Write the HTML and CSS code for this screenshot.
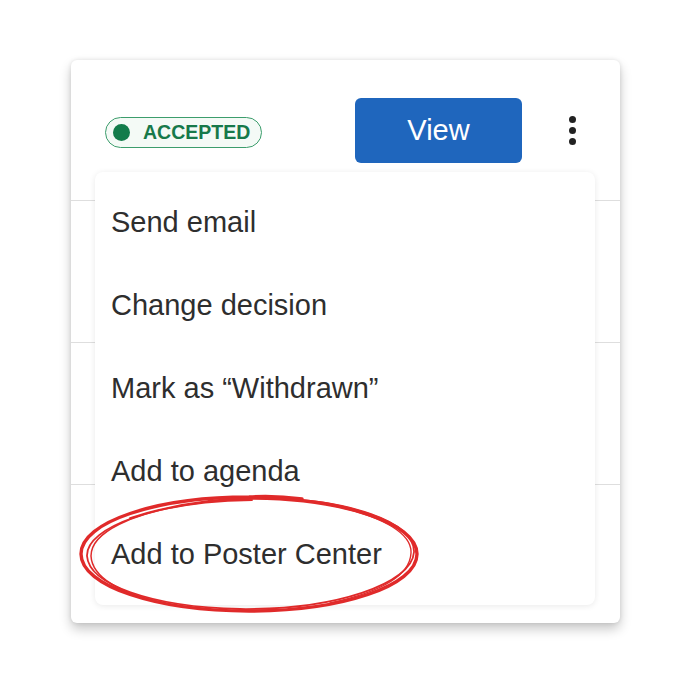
FILE: index.html
```html
<!DOCTYPE html>
<html>
<head>
<meta charset="utf-8">
<link rel="stylesheet" href="styles.css">
</head>
<body>
<div class="card">
  <div class="row header">
    <span class="badge"><span class="dot"></span>ACCEPTED</span>
    <span class="spacer"></span>
    <button class="view">View</button>
    <span class="kebab"><i></i><i></i><i></i></span>
  </div>
  <div class="row"></div>
  <div class="row"></div>
  <div class="row last"></div>

  <ul class="menu">
    <li>Send email</li>
    <li>Change decision</li>
    <li>Mark as “Withdrawn”</li>
    <li>Add to agenda</li>
    <li>Add to Poster Center</li>
  </ul>
</div>
<svg class="scribble" width="699" height="692" viewBox="0 0 699 692">
  <path d="M 302 499 C 280 496 262 496 249 497 C 156 497 81 522 81 554 C 81 586 156 611 249 611 C 342 611 417 586 417 554 C 417 523 342 498 249 498" fill="none" stroke="#e02a2a" stroke-width="3.4" stroke-linecap="round"/>
  <path d="M 252 500 C 158 501 86 527 87 556 C 89 584 150 607 240 609 C 335 610 412 584 414 552 C 415 522 350 499 260 498 C 215 498 170 505 130 518" fill="none" stroke="#e02a2a" stroke-width="1.8" stroke-linecap="round"/>
  <path d="M 200 503 C 130 512 91 533 91 556 C 92 577 120 594 165 603" fill="none" stroke="#e02a2a" stroke-width="1.5" stroke-linecap="round"/>
  <path d="M 330 505 C 387 517 412 535 411 553 C 410 575 381 592 330 603" fill="none" stroke="#e02a2a" stroke-width="1.4" stroke-linecap="round"/>
</svg>
</body>
</html>
```
FILE: styles.css
```css
* { box-sizing: border-box; }
html, body { margin: 0; padding: 0; background: #ffffff; }
body {
  width: 699px;
  height: 692px;
  padding: 60px 0 0 71px;
  font-family: "Liberation Sans", Arial, Helvetica, sans-serif;
  position: relative;
}
.card {
  position: relative;
  width: 549px;
  height: 563px;
  background: #ffffff;
  border-radius: 6px;
  box-shadow: 0 6px 12px rgba(0,0,0,0.22), 0 0 4px rgba(0,0,0,0.10);
  display: flex;
  flex-direction: column;
}
.row {
  height: 142px;
  border-bottom: 1px solid #dedede;
  flex: none;
}
.row.last { border-bottom: none; flex: 1; }
.header {
  height: 141px;
  display: flex;
  align-items: center;
  padding: 0 36px 0 34px;
}
.spacer { flex: 1; }
.badge {
  display: inline-flex;
  align-items: center;
  gap: 13px;
  height: 31px;
  margin-top: 4px;
  padding: 0 11px 0 7px;
  border: 1.5px solid #3c9d6c;
  border-radius: 16px;
  background: #f4faf6;
  color: #17794a;
  font-size: 19.5px;
  font-weight: 700;
}
.dot {
  width: 17px;
  height: 17px;
  border-radius: 50%;
  background: #137c4b;
}
.view {
  width: 167px;
  height: 65px;
  margin-top: 0;
  border: none;
  border-radius: 6px;
  background: #1f66bd;
  color: #ffffff;
  font-family: inherit;
  font-size: 29px;
  padding: 0;
}
.kebab {
  width: 24px;
  margin-left: 38px;
  display: flex;
  flex-direction: column;
  align-items: center;
  gap: 4px;
}
.kebab i {
  display: block;
  width: 7px;
  height: 7px;
  border-radius: 50%;
  background: #222222;
}
.menu {
  position: absolute;
  left: 24px;
  top: 112px;
  width: 500px;
  height: 433px;
  margin: 0;
  padding: 9px 0;
  list-style: none;
  background: #ffffff;
  border-radius: 8px;
  box-shadow: 0 1px 6px rgba(0,0,0,0.09);
}
.menu li {
  height: 83px;
  display: flex;
  align-items: center;
  padding-left: 16px;
  font-size: 29px;
  color: #2e2e2e;
}
.scribble {
  position: absolute;
  left: 0;
  top: 0;
  pointer-events: none;
}
```
